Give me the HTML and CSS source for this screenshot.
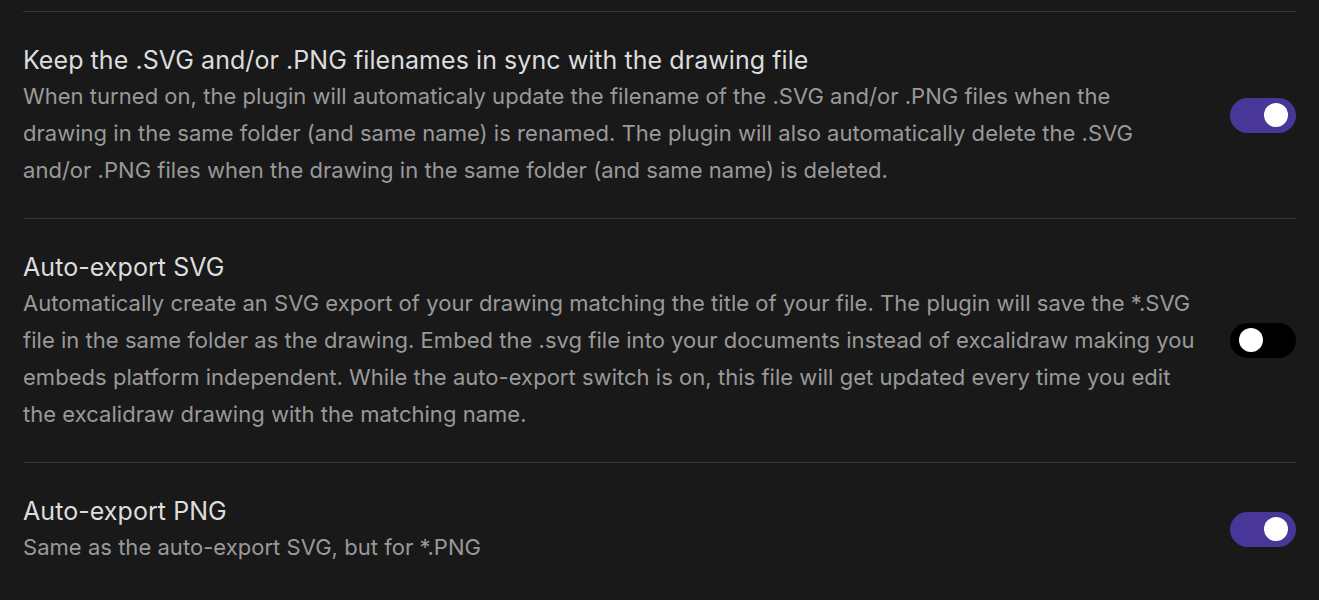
FILE: index.html
```html
<!DOCTYPE html>
<html lang="en">
<head>
    <meta charset="UTF-8">
    <title>Excalidraw Settings</title>
    <link rel="stylesheet" href="styles.css">
</head>
<body>

    <div class="settings">
        <div class="setting-item">
            <div class="setting-info">
                <div class="setting-name">Keep the .SVG and/or .PNG filenames in sync with the drawing file</div>
                <div class="setting-desc">When turned on, the plugin will automaticaly update the filename of the .SVG and/or .PNG files when the drawing in the same folder (and same name) is renamed. The plugin will also automatically delete the .SVG and/or .PNG files when the drawing in the same folder (and same name) is deleted.</div>
            </div>
            <div class="setting-control">
                <div class="toggle is-enabled"><span class="knob"></span></div>
            </div>
        </div>

        <div class="setting-item">
            <div class="setting-info">
                <div class="setting-name">Auto-export SVG</div>
                <div class="setting-desc">Automatically create an SVG export of your drawing matching the title of your file. The plugin will save the *.SVG file in the same folder as the drawing. Embed the .svg file into your documents instead of excalidraw making you embeds platform independent. While the auto-export switch is on, this file will get updated every time you edit the excalidraw drawing with the matching name.</div>
            </div>
            <div class="setting-control">
                <div class="toggle"><span class="knob"></span></div>
            </div>
        </div>

        <div class="setting-item">
            <div class="setting-info">
                <div class="setting-name">Auto-export PNG</div>
                <div class="setting-desc">Same as the auto-export SVG, but for *.PNG</div>
            </div>
            <div class="setting-control">
                <div class="toggle is-enabled"><span class="knob"></span></div>
            </div>
        </div>
    </div>

</body>
</html>
```

FILE: styles.css
```css
body {
    margin: 0;
    background-color: #191919;
    font-family: Inter, "Noto Sans", sans-serif;
    color: #dcddde;
}
.settings {
    padding: 11px 23px 0 23px;
}
.setting-item {
    display: flex;
    align-items: center;
    border-top: 1px solid #363636;
    padding: 30px 0 29.3px 0;
}
.setting-info {
    flex: 1;
    margin-right: 30px;
}
.setting-name {
    font-size: 25px;
    line-height: 36px;
    letter-spacing: 0.06px;
    color: #dcddde;
}
.setting-desc {
    font-size: 22px;
    line-height: 36.9px;
    letter-spacing: 0.03px;
    color: #999;
}
.setting-control {
    flex: none;
}
.toggle {
    position: relative;
    width: 66px;
    height: 35px;
    border-radius: 18px;
    background: #000;
}
.toggle .knob {
    position: absolute;
    top: 5px;
    left: 9px;
    width: 24px;
    height: 24px;
    border-radius: 50%;
    background: #fff;
}
.toggle.is-enabled {
    background: #483699;
}
.toggle.is-enabled .knob {
    left: 34px;
}
```
